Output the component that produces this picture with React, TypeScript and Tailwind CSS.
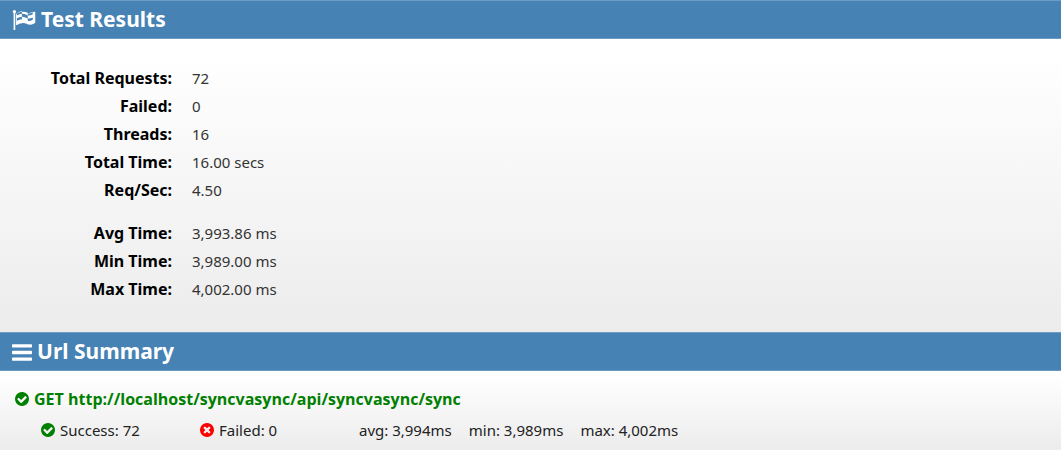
import type { ReactNode } from "react";

const ICONS = {
  flag: {
    box: "64 128 1728 1536",
    d: "M768 841v-192q-181 16-384 117v185q205-96 384-110zm0-418v-197q-172 8-384 126v189q215-111 384-118zm832 463v-184q-235 116-384 71v-224q-20-6-39-15-5-3-33-17t-34.5-17-31.5-15-34.5-15.5-32.5-13-36-12.5-35-8.5-39.5-7.5-39.5-4-44-2q-23 0-49 3v222h19q102 0 192.5 29t197.5 82q19 9 39 15v188q42 17 91 17 120 0 293-92zm0-427v-189q-169 91-306 91-45 0-78-8v196q148 42 384-90zm-1280-203q0 35-17.5 64t-46.5 46v1266q0 14-9 23t-23 9h-64q-14 0-23-9t-9-23v-1266q-29-17-46.5-46t-17.5-64q0-53 37.5-90.5t90.5-37.5 90.5 37.5 37.5 90.5zm1472 64v763q0 39-35 57-10 5-17 9-218 116-370 116-88 0-158-35l-28-14q-64-33-99-48t-91-29-114-14q-102 0-235.5 44t-228.5 102q-15 9-33 9-16 0-32-8-32-19-32-56v-742q0-35 31-55 35-21 78.5-42.5t114-52 152.5-49.5 155-19q112 0 209 31t209 86q38 19 89 19 122 0 310-112 22-12 31-17 31-16 62 2 31 20 31 55z",
  },
  bars: {
    box: "128 256 1536 1280",
    d: "M1664 1344v128q0 26-19 45t-45 19h-1408q-26 0-45-19t-19-45v-128q0-26 19-45t45-19h1408q26 0 45 19t19 45zm0-512v128q0 26-19 45t-45 19h-1408q-26 0-45-19t-19-45v-128q0-26 19-45t45-19h1408q26 0 45 19t19 45zm0-512v128q0 26-19 45t-45 19h-1408q-26 0-45-19t-19-45v-128q0-26 19-45t45-19h1408q26 0 45 19t19 45z",
  },
  check: {
    box: "128 128 1536 1536",
    d: "M1412 734q0-28-18-46l-91-90q-19-19-45-19t-45 19l-408 407-226-226q-19-19-45-19t-45 19l-91 90q-18 18-18 46 0 27 18 45l362 362q19 19 45 19 27 0 46-19l543-543q18-18 18-45zm252 162q0 209-103 385.5t-279.5 279.5-385.5 103-385.5-103-279.5-279.5-103-385.5 103-385.5 279.5-279.5 385.5-103 385.5 103 279.5 279.5 103 385.5z",
  },
  times: {
    box: "128 128 1536 1536",
    d: "M1277 1122q0-26-19-45l-181-181 181-181q19-19 19-45 0-27-19-46l-90-90q-19-18-46-18-26 0-45 18l-181 181-181-181q-19-18-45-18-27 0-46 18l-90 90q-19 19-19 46 0 26 19 45l181 181-181 181q-19 19-19 45 0 27 19 46l90 90q19 18 46 18 26 0 45-18l181-181 181 181q19 18 45 18 27 0 46-18l90-90q19-19 19-46zm387-226q0 209-103 385.5t-279.5 279.5-385.5 103-385.5-103-279.5-279.5-103-385.5 103-385.5 279.5-279.5 385.5-103 385.5 103 279.5 279.5 103 385.5z",
  },
};

const totals: [string, string][] = [
  ["Total Requests:", "72"],
  ["Failed:", "0"],
  ["Threads:", "16"],
  ["Total Time:", "16.00 secs"],
  ["Req/Sec:", "4.50"],
];

const timings: [string, string][] = [
  ["Avg Time:", "3,993.86 ms"],
  ["Min Time:", "3,989.00 ms"],
  ["Max Time:", "4,002.00 ms"],
];

function Icon({ name, className }: { name: keyof typeof ICONS; className: string }) {
  return (
    <svg viewBox={ICONS[name].box} className={className} fill="currentColor" aria-hidden="true">
      <path d={ICONS[name].d} />
    </svg>
  );
}

function Header({ icon, children }: { icon: ReactNode; children: ReactNode }) {
  return (
    <h2 className="flex h-[39px] items-center gap-[5px] border-y border-[#6c9bc3] bg-[#4682b4] px-3 pt-px text-[21px] font-bold text-white">
      {icon}
      {children}
    </h2>
  );
}

function Rows({ rows }: { rows: [string, string][] }) {
  return (
    <tbody>
      {rows.map(([label, value]) => (
        <tr key={label} className="h-7">
          <th scope="row" className="w-[172px] p-0 text-right text-base font-bold text-black">
            {label}
          </th>
          <td className="py-0 pr-0 pl-5 text-[#333333]">{value}</td>
        </tr>
      ))}
    </tbody>
  );
}

export default function App() {
  return (
    <main className="min-h-screen bg-[#eeeeee] font-['Noto_Sans','Open_Sans',sans-serif] text-[15px] text-[#222222]">
      <section>
        <Header icon={<Icon name="flag" className="h-5 w-6" />}>Test Results</Header>
        <div className="bg-linear-to-b from-white from-5% to-[#ececec] pt-[25px] pb-[29px]">
          <table className="border-collapse">
            <Rows rows={totals} />
            <tbody aria-hidden="true">
              <tr className="h-[15px]">
                <td colSpan={2} className="p-0" />
              </tr>
            </tbody>
            <Rows rows={timings} />
          </table>
        </div>
      </section>
      <section>
        <Header icon={<Icon name="bars" className="h-[17px] w-5" />}>Url Summary</Header>
        <div className="bg-linear-to-b from-white from-5% to-[#ececec] pt-4 pb-2">
          <div className="flex h-6 items-center gap-[5px] px-[15px] font-['Open_Sans',sans-serif] text-base font-bold text-[#008000]">
            <Icon name="check" className="size-[14px]" />
            GET http://localhost/syncvasync/api/syncvasync/sync
          </div>
          <div className="flex h-[30px] items-center pt-2 pl-[41px]">
            <span className="flex w-[159px] items-center gap-[5px]">
              <Icon name="check" className="size-[14px] text-[#008000]" />
              Success: 72
            </span>
            <span className="flex w-[159px] items-center gap-[5px]">
              <Icon name="times" className="size-[14px] text-[#ff0000]" />
              Failed: 0
            </span>
            <span className="flex gap-[17px]">
              <span>avg: 3,994ms</span>
              <span>min: 3,989ms</span>
              <span>max: 4,002ms</span>
            </span>
          </div>
        </div>
      </section>
    </main>
  );
}
